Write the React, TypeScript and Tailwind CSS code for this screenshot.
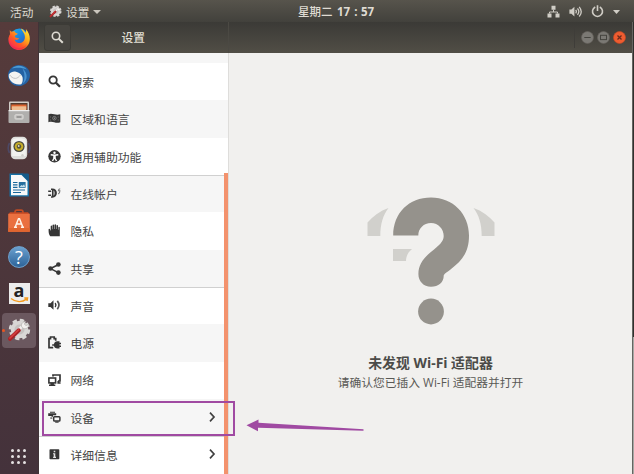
import type { ReactNode } from 'react';

const FONT = "font-['Open_Sans','Noto_Sans_CJK_SC',sans-serif]";

function GearTool({ size }: { size: number }) {
  return (
    <svg width={size} height={size} viewBox="0 0 24 24">
      <circle cx="12.500" cy="11.500" r="8.800" fill="#d9d7d5" />
      <circle cx="12.500" cy="11.500" r="9.200" fill="none" stroke="#d9d7d5" strokeWidth="3" strokeDasharray="4.300 2.925" />
      <circle cx="12.500" cy="11.500" r="5" fill="#c6c2c0" />
      <path d="M10 13.500 16 7.500" stroke="#f1efed" strokeWidth="2.800" />
      <path d="M14.800 9.200c-1.200-3 .8-5.700 4-5.600l-1.500 2.400 1.500 1.600 2.900-1.200c.2 3.200-2.600 5-5.200 4z" fill="#f3f1ef" stroke="#aaa6a3" strokeWidth=".6" />
      <path d="M3 20.800 11.800 12.300" stroke="#a92328" strokeWidth="4" strokeLinecap="round" />
      <path d="M3 20 11.300 12" stroke="#d5403f" strokeWidth="1.700" strokeLinecap="round" />
    </svg>
  );
}

function Firefox() {
  return (
    <svg width="24" height="24" viewBox="0 0 24 24">
      <defs>
        <linearGradient id="ff" x1="1" y1="0" x2=".15" y2="1">
          <stop offset="0" stopColor="#fff04a" />
          <stop offset=".35" stopColor="#ffb31a" />
          <stop offset=".65" stopColor="#ff5a24" />
          <stop offset="1" stopColor="#f21c6a" />
        </linearGradient>
        <linearGradient id="fb" x1="0" y1="0" x2="1" y2="1">
          <stop offset="0" stopColor="#18b5f5" />
          <stop offset="1" stopColor="#2949bd" />
        </linearGradient>
      </defs>
      <circle cx="12.500" cy="11" r="9.600" fill="url(#fb)" />
      <path d="M2.800 4.500 3 7.200C0 12 1.300 18 6 21.300c5 3.300 12 1.800 15.200-3.500 2.800-4.800 2-11-2.400-15.800.6 2 .3 3-.3 3.800-1-2-2.500-3.300-4.500-4.300 1 2.500 3.800 4.500 3.900 8.500 0 4.600-3.600 6.600-6.600 6-2.700-.5-3.600-2.300-3.500-3.400 1.700.9 3.200.1 4.500-1-1.600-.7-4.600-.4-4.500-2.400 0-1.400 2.600-1.200 2.900-2.800-1.400-.2-2.600-.7-2.900-2-.7-.4-2.200-.2-2.800.3-1.100-.3-1.800-1-2.200-1.700z" fill="url(#ff)" />
      <path d="M2 13c1 5 5 8 10 8 3 0 6-1.500 8-4-2 4-5 6-9 5.800C6 22 2.500 18 2 13z" fill="#ef2a46" opacity=".55" />
    </svg>
  );
}

function Thunderbird() {
  return (
    <svg width="24" height="24" viewBox="0 0 24 24">
      <path d="M1.500 8C4 2 10-.2 16 1.500c6 2 8.500 8.500 6 14-2.500 5.500-9 8-14.500 5.800C2 19 0 13 1.500 8z" fill="#2462a3" />
      <path d="M5 4.500C9 .5 16 .8 19.800 5.500 16 3.500 9 3 5 4.500z" fill="#4f9dd6" />
      <path d="M15.500 4.500c5.500 4.500 5.500 11.500.2 15.500 2.500-5 2.300-10.500-.2-15.500z" fill="#4b93d0" />
      <path d="M1.800 10.500c2.200-2.500 4.700-3.300 7.200-2.700 3 .6 5.300 2.200 6.500 5.200.5 2.600.3 5.700-1.200 7.300-4 .8-8.300-.5-11-4.100-1.300-1.700-1.800-3.700-1.500-5.700z" fill="#f4f4f1" />
      <path d="M2.500 10.800c1.500 2 3.500 3.600 5.800 3.600 2.200 0 3.700-1.700 5.200-3.300" fill="none" stroke="#b6b8b9" strokeWidth=".8" />
    </svg>
  );
}

function Files() {
  return (
    <svg width="24" height="24" viewBox="0 0 24 24">
      <rect x="2" y="1.500" width="20" height="21" rx="1" fill="#d1cdc8" />
      <rect x="3.500" y="3" width="17" height="7.500" fill="#51392d" />
      <path d="M4.300 4.500h15.300v5H4.300z" fill="#dd632e" />
      <path d="M4.800 6.300h14.400v4H4.800z" fill="#edbd91" />
      <path d="M1.500 10h21v12c0 .6-.3 1-.9 1H2.400c-.6 0-.9-.4-.9-1z" fill="#b0afad" />
      <path d="M1.700 10h20.600v1.200H1.700z" fill="#efeeed" />
      <rect x="8" y="14.800" width="8" height="4.200" rx=".7" fill="#bbb9b7" stroke="#e4e3e1" strokeWidth=".9" />
      <path d="M9.700 16.500h4.600v1H9.700z" fill="#777" />
    </svg>
  );
}

function Rhythmbox() {
  return (
    <svg width="24" height="24" viewBox="0 0 24 24">
      <path d="M2.500 7c-1.600 3-1.600 7 0 10M21.500 7c1.600 3 1.600 7 0 10" fill="none" stroke="#4d4966" strokeWidth="1.600" />
      <rect x="3.800" y=".8" width="16.400" height="22.400" rx="4.500" fill="#dededb" />
      <path d="M5.200 4c1-2.200 12.600-2.200 13.600 0v16H5.200z" fill="#f2f2ef" />
      <circle cx="12" cy="10.500" r="5.600" fill="#4a4a40" />
      <circle cx="12" cy="10.500" r="4.300" fill="#c7ae2a" />
      <circle cx="12" cy="10.500" r="2.200" fill="#57543c" />
      <circle cx="11.700" cy="10" r=".9" fill="#e4e0c8" />
      <circle cx="15.500" cy="19.300" r="1.200" fill="#d0d0cd" />
    </svg>
  );
}

function Writer() {
  return (
    <svg width="24" height="24" viewBox="0 0 24 24">
      <path d="M2.500.5h13.500l6 6v17h-19.500z" fill="#1670a5" />
      <path d="M4 2h10.500l6 6v14.200H4z" fill="#f8f9f9" />
      <path d="M13.700.5H20.500c1 0 1.500.5 1.500 1.500v7z" fill="#165b89" />
      <path d="M6 9.500h4.500M6 11.900h4.500M6 14.300h4.500M6 17h12M6 19.500h8" stroke="#19689b" strokeWidth="1.200" />
      <rect x="11.800" y="9" width="6.800" height="5.800" fill="#266f9e" />
      <path d="m12.500 14 2-2 1.200.8 1.400-1.500 1 2.700z" fill="#c1dfec" />
    </svg>
  );
}

function Software() {
  return (
    <svg width="24" height="24" viewBox="0 0 24 24">
      <path d="M8 6V3.300C8 2 8.700 1.200 10 1.200h4c1.300 0 2 .8 2 2.100V6" fill="none" stroke="#c04c24" strokeWidth="1.700" />
      <path d="M1.500 5 3 3.200h18l1.500 1.800z" fill="#c64a24" />
      <path d="M1.200 4.800h21.600v18H1.200z" fill="#ea7040" />
      <path d="M1.200 19h21.600v3.800H1.200z" fill="#e0652f" />
      <path d="m8.300 17.800 3.200-8h1l3.200 8M9.200 15h5.600M7 18.200h3M14 18.200h3" fill="none" stroke="#fff4e9" strokeWidth="1.500" />
    </svg>
  );
}

function Help() {
  return (
    <div className="flex h-[22px] w-[22px] items-center justify-center rounded-full border border-[#6fa1cd] bg-linear-to-b from-[#6aa0cf] to-[#2d6398]">
      <span className="font-['Open_Sans',sans-serif] text-[18px] leading-none text-white">?</span>
    </div>
  );
}

function Amazon() {
  return (
    <div className="relative flex h-[21px] w-[21px] justify-center bg-[#ececec]">
      <span className="mt-[-2px] font-['Open_Sans',sans-serif] text-[18px] leading-[19px] font-bold text-[#222]">a</span>
      <svg className="absolute bottom-[1px] left-[1px]" width="19" height="6" viewBox="0 0 19 6">
        <path d="M1 1.500c5 4 11 4 15.500.7M14.300 1h3.200L17 3.800" fill="none" stroke="#f49a1e" strokeWidth="1.500" />
      </svg>
    </div>
  );
}

function Glyph({ children }: { children: ReactNode }) {
  return (
    <svg width="13" height="13" viewBox="0 0 13 13" fill="#363636" stroke="none" className="shrink-0">
      {children}
    </svg>
  );
}

const glyphs = {
  search: (
    <Glyph>
      <circle cx="5.100" cy="5" r="3.700" fill="none" stroke="#363636" strokeWidth="1.800" />
      <path d="m7.800 7.600 4.200 4.100" stroke="#363636" strokeWidth="2.200" />
    </Glyph>
  ),
  region: (
    <Glyph>
      <path d="M.4 2.300c2-1 3.800-.6 5.800 0s4 .7 6.100 0v8c-2.200.8-4.100.6-6.100 0s-3.800-.7-5.800 0z" />
      <circle cx="6.400" cy="6.200" r="1.800" fill="none" stroke="#999" strokeWidth=".7" />
      <path d="M2.600 4.500v1M10.200 4.500v1M2.600 7.500v1M10.200 7.500v1" stroke="#888" strokeWidth=".8" />
      <circle cx="6.400" cy="6.200" r=".6" fill="#aaa" />
    </Glyph>
  ),
  access: (
    <Glyph>
      <circle cx="6.500" cy="6.300" r="6.200" />
      <circle cx="6.500" cy="2.700" r="1.200" fill="#fff" />
      <path d="M2.700 4.800 6.500 5.300l3.800-.5M6.500 5v2.300L4.500 11M6.500 7.300 8.500 11" stroke="#fff" strokeWidth="1.400" fill="none" />
      <path d="M5.300 5h2.400v3H5.300z" fill="#fff" />
    </Glyph>
  ),
  online: (
    <Glyph>
      <path d="M.2 4.200h3M.2 8.200h3" stroke="#363636" strokeWidth="1.400" />
      <path d="M3 1.500h1.300c2.900 0 4.600 1.900 4.600 4.600s-1.700 4.700-4.600 4.700H3V9.300h1V3H3z" />
      <path d="M5.200 3.500v5.200c1.300-.3 1.900-1.200 1.900-2.600S6.500 3.800 5.200 3.500z" fill="#999" />
      <path d="M12.200 1.800c-1.600.2-1.800 1-1.800 1.900h1.500c0 1.700-.4 2.600-1.700 3.300" fill="none" stroke="#777" strokeWidth="1.100" />
    </Glyph>
  ),
  privacy: (
    <Glyph>
      <path d="M.6 7V5.300c0-.9 1.300-.9 1.400 0l.3 1.300h.4V2.200c0-1 1.400-1 1.400 0v3h.4V1.200c0-1 1.600-1 1.600 0V5h.4V.9c0-1 1.600-1 1.600 0V5h.4V1.800c0-1 1.500-1 1.500 0v4h.4V3.500c0-1 1.400-1 1.400 0v8.700H2.300C1.200 11 .6 9 .6 7z" />
    </Glyph>
  ),
  share: (
    <Glyph>
      <path d="M10.200 2.800 2.600 6.600l7.600 4" fill="none" stroke="#363636" strokeWidth="1.600" />
      <circle cx="10.400" cy="2.500" r="2.300" />
      <circle cx="2.500" cy="6.500" r="2.300" />
      <circle cx="10.400" cy="10.600" r="2.300" />
    </Glyph>
  ),
  sound: (
    <Glyph>
      <path d="M.3 4.300h2.200l3-3v9.400l-3-2.800H.3z" />
      <path d="M7.200 4c.9 1.300.9 2.900 0 4.200" fill="none" stroke="#363636" strokeWidth="1.400" />
      <path d="M9.300 1.900c2 2.500 2 5.800 0 8.400" fill="none" stroke="#555" strokeWidth="1.700" />
    </Glyph>
  ),
  power: (
    <Glyph>
      <path d="M5.200 11.700H1V2.600h1.500V1h3.700v1.600h1.500v2.100" fill="none" stroke="#363636" strokeWidth="1.700" />
      <path d="M11.500 5.200h-2C7.200 5.200 6 6.700 6 8.200H4.200v1.500H6c.2 1.700 1.400 2.700 3.500 2.700h2v-1.500H13V9.500h-1.500V8.200H13V6.800h-1.500z" />
    </Glyph>
  ),
  network: (
    <Glyph>
      <path d="M5 2.500V1h7v6H10" fill="none" stroke="#363636" strokeWidth="1.700" />
      <rect x=".9" y="4" width="6.700" height="4.900" fill="none" stroke="#363636" strokeWidth="1.600" />
      <path d="M2.500 9h3.400v1.500h1.400v1.400H1v-1.400h1.500zM9.400 7h2v1.300h1.200v1.500H9.400z" />
    </Glyph>
  ),
  devices: (
    <Glyph>
      <path d="M2 .7h5v1.100H2zM.2 2.300h8v2H5v1.400H3.500V4.900H.2z" />
      <path d="M2.300 6.300h2v1.500h-2z" fill="#666" />
      <rect x="5.700" y="5.700" width="6.200" height="4.300" rx=".8" fill="none" stroke="#363636" strokeWidth="1.500" />
      <path d="M7.200 10.500h3.400v1.200H7.200z" />
    </Glyph>
  ),
  details: (
    <Glyph>
      <rect x="1.500" y="1.300" width="9.800" height="10" rx=".8" />
      <path d="M5.700 2.700h1.600v1.500H5.700zM5 5.300h2.300v3.500H8v1.100H5.100V8.800h.6V6.300H5z" fill="#e2e2e2" />
    </Glyph>
  ),
};

function Row({ icon, label, grey, line, arrow }: { icon: ReactNode; label: string; grey?: boolean; line?: boolean; arrow?: boolean }) {
  return (
    <div className={`flex h-[37.333px] shrink-0 items-center border-t pl-[9px] ${grey ? 'bg-[#f6f6f6]' : 'bg-white'} ${line ? 'border-[#d0d0d0]' : 'border-transparent'}`}>
      <span className="mb-px flex">{icon}</span>
      <span className="mb-[.6px] ml-[9.500px] text-[11.8px] leading-[18px] text-[#454545]">{label}</span>
      {arrow && (
        <svg className="mr-[12px] mb-[2px] ml-auto" width="8" height="12" viewBox="0 0 8 12">
          <path d="m2 1.700 4 4.300-4 4.300" fill="none" stroke="#404040" strokeWidth="1.700" />
        </svg>
      )}
    </div>
  );
}

function WindowButton({ close, children }: { close?: boolean; children: ReactNode }) {
  return (
    <svg width="13" height="13" viewBox="0 0 13 13">
      <circle cx="6.500" cy="6.500" r="6" fill={close ? '#ee5c30' : '#7b7974'} stroke={close ? '#c34b27' : '#65625c'} strokeWidth=".7" />
      <g fill="none" stroke={close ? '#692b1d' : '#45443f'}>{children}</g>
    </svg>
  );
}

function TopBar() {
  return (
    <header className="grid h-[22px] shrink-0 grid-cols-[298px_1fr_auto] items-center bg-linear-to-b from-[#57544c] to-[#42413c] text-[11.7px] leading-[22px] text-[#dfdbd2]">
      <div className="flex items-center pl-[10px]">
        <span className="w-[39px]">活动</span>
        <GearTool size={13} />
        <span className="ml-[4px]">设置</span>
        <svg className="ml-[4px]" width="8" height="4" viewBox="0 0 8 4"><path d="M0 0h8L4 4z" fill="#cac6bd" /></svg>
      </div>
      <div className="flex pt-px text-[11.5px] font-bold">
        <span className="w-[39px] font-medium">星期二</span>
        <span className="w-[14px]">17</span>
        <span className="w-[10px] text-center">:</span>
        <span>57</span>
      </div>
      <div className="flex items-center pr-[14px]">
        <svg width="13" height="13" viewBox="0 0 13 13" fill="#d0cdc6">
          <path d="M4.500.8h4v4h-4zM.5 8.500h4v4h-4zM8.500 8.500h4v4h-4z" />
          <path d="M6.500 4.800v2.200M2.500 8.500V7h8v1.500" fill="none" stroke="#d0cdc6" />
        </svg>
        <svg className="ml-[9px]" width="13" height="13" viewBox="0 0 13 13" fill="none" stroke="#d0cdc6">
          <path d="M.4 4.500h2l3-2.800v9.800l-3-2.800h-2z" fill="#d0cdc6" stroke="none" />
          <path d="M6.700 4.800c.8 1.100.8 2.500 0 3.600M8.500 3.300c1.600 2 1.600 4.600 0 6.600M10.200 1.800c2.500 3 2.500 6.800 0 9.700" strokeWidth="1.300" />
        </svg>
        <svg className="ml-[9px]" width="13" height="13" viewBox="0 0 13 13" fill="none" stroke="#d0cdc6" strokeWidth="1.600">
          <path d="M4.200 2a5 5 0 1 0 4.600 0M6.500.2v5.700" />
        </svg>
        <svg className="ml-[9px]" width="7" height="4" viewBox="0 0 7 4"><path d="M0 0h7L3.500 4z" fill="#d0cdc6" /></svg>
      </div>
    </header>
  );
}

function Dock() {
  const apps = [Firefox, Thunderbird, Files, Rhythmbox, Writer, Software, Help, Amazon];
  return (
    <aside className="flex w-[39px] shrink-0 flex-col border-r border-[#403337] bg-linear-to-b from-[#563b3b] to-[#44323b]">
      {apps.map((App, i) => (
        <div key={i} className="flex h-[36.350px] shrink-0 items-center justify-center pb-[1.500px]"><App /></div>
      ))}
      <div className="ml-[2px] flex h-[35px] w-[34px] shrink-0 items-center rounded-[4px] bg-[#6b585f]">
        <span className="h-[3px] w-[3px] shrink-0 rounded-full bg-[#e95420]" />
        <span className="ml-[2px]"><GearTool size={24} /></span>
      </div>
      <div className="mt-auto mb-[10.500px] ml-[11px] grid w-[15px] grid-cols-3 gap-[3px]">
        {Array.from({ length: 9 }, (_, i) => <span key={i} className="h-[3px] w-[3px] rounded-full bg-[#e5e1e2]" />)}
      </div>
    </aside>
  );
}

function HeaderBar() {
  return (
    <div className="flex h-[31px] shrink-0 items-center bg-linear-to-b from-[#3b3a36] to-[#514e46]">
      <div className="flex h-full w-[190px] shrink-0 items-center border-r border-[#4b4943] pl-[5px]">
        <div className="flex h-[27px] w-[27px] items-center justify-center rounded-[3px] border border-[#3c3b36] bg-[#474540]">
          <svg width="13" height="13" viewBox="0 0 13 13" fill="none" stroke="#dedbd3">
            <circle cx="5" cy="5" r="3.700" strokeWidth="1.600" /><path d="m7.600 7.600 4.200 4.200" strokeWidth="2" />
          </svg>
        </div>
        <span className="ml-[50.500px] text-[11.700px] font-medium text-[#e4e0d7]">设置</span>
      </div>
      <div className="ml-auto flex items-center gap-[3px] border-l border-[#3f3d39] py-1 pr-[6px] pl-[6px]">
        <WindowButton><path d="M3.300 6.500h6.400" /></WindowButton>
        <WindowButton><rect x="3.500" y="4.300" width="6" height="4.300" /></WindowButton>
        <WindowButton close><path d="m4.500 4.500 4 4M8.500 4.500l-4 4" strokeWidth="1.300" /></WindowButton>
      </div>
    </div>
  );
}

function Sidebar() {
  return (
    <nav className="relative flex w-[190px] shrink-0 flex-col border-r border-[#dedddb] bg-white">
      <div className="h-[10px] shrink-0 bg-[#f6f6f6]" />
      <Row icon={glyphs.search} label="搜索" />
      <Row icon={glyphs.region} label="区域和语言" grey />
      <Row icon={glyphs.access} label="通用辅助功能" />
      <Row icon={glyphs.online} label="在线帐户" grey line />
      <Row icon={glyphs.privacy} label="隐私" />
      <Row icon={glyphs.share} label="共享" grey />
      <Row icon={glyphs.sound} label="声音" line />
      <Row icon={glyphs.power} label="电源" grey />
      <Row icon={glyphs.network} label="网络" />
      <Row icon={glyphs.devices} label="设备" grey arrow />
      <Row icon={glyphs.details} label="详细信息" line arrow />
      <div className="absolute top-[120px] right-0 bottom-0 w-[4px] bg-[#f3926d]" />
    </nav>
  );
}

function WifiPanel() {
  return (
    <main className="flex min-w-0 flex-1 flex-col items-center bg-[#f1f0ee]">
      <svg className="mt-[144px] ml-[1px] shrink-0" width="128" height="128" viewBox="0 0 128 128">
        <path d="M.5 39V25.500C6 19 13 14 21.500 11 16 18 13.300 27 13.300 39zM127.500 39V25.500C122 19 115 14 106.500 11c5.500 7 8.200 16 8.200 28zM26 52h19c-4.200 3.500-6 7.500-6 12H26z" fill="#d1d0cc" />
        <path d="M26.200 38.500C26.200 16 42 .5 64 .5s38 16.500 38 38c0 17-7 25-18.500 34-4.500 3.500-6.800 4.500-6.800 6.500 0 6.300-5.300 10.700-12.700 10.700-7.500 0-12.600-5.300-12.600-12.700 0-9 4.600-15.500 12.500-22 8.100-6.700 12.800-10.200 12.800-16 0-7-5.400-13-12.700-13s-12.700 5.500-12.700 12.500z" fill="#95928c" />
        <circle cx="64" cy="114.500" r="12.900" fill="#95928c" />
      </svg>
      <h1 className="mt-[28px] text-[13.900px] leading-[20px] font-bold whitespace-nowrap text-[#4b4b48]">未发现 Wi-Fi 适配器</h1>
      <p className="text-[11.760px] leading-[18px] whitespace-nowrap text-[#595955]">请确认您已插入 Wi-Fi 适配器并打开</p>
    </main>
  );
}

export default function App() {
  return (
    <div className={`relative flex h-[474px] w-[634px] flex-col overflow-hidden ${FONT}`}>
      <TopBar />
      <div className="flex min-h-0 flex-1">
        <Dock />
        <section className="flex min-w-0 flex-1 flex-col overflow-hidden">
          <HeaderBar />
          <div className="flex min-h-0 flex-1 overflow-hidden"><Sidebar /><WifiPanel /></div>
        </section>
        <div className="flex w-[2px] shrink-0">
          <div className="w-px bg-[#656561]" />
          <div className="flex w-px flex-col bg-[#a7a7a4]"><div className="h-[315px] bg-[#30302d]" /></div>
        </div>
      </div>
      <div className="absolute top-[401px] left-[42px] h-[35px] w-[193px] border-2 border-[#a04aa2]" />
      <svg className="absolute top-[418px] left-[245px]" width="120" height="15" viewBox="0 0 120 15">
        <path d="M1.500 7.300 13.500 1.500v3.200L118.500 11.200v1.500L13 9.700v3.600z" fill="#a04aa2" />
      </svg>
    </div>
  );
}
